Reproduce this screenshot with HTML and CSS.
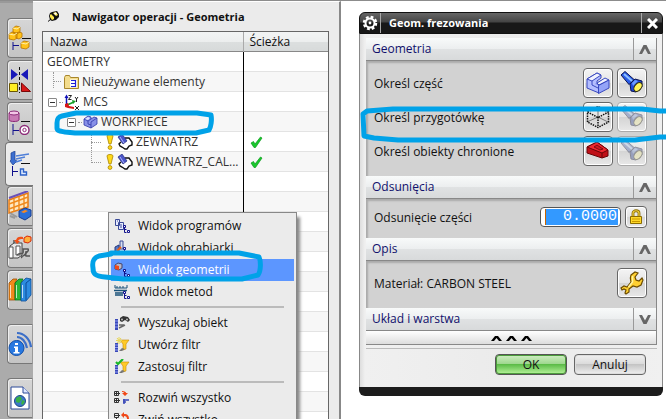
FILE: index.html
```html
<!DOCTYPE html>
<html lang="pl">
<head>
    <meta charset="UTF-8">
    <meta name="viewport" content="width=device-width, initial-scale=1.0">
    <title>Nawigator operacji - Geometria</title>
    <link rel="stylesheet" href="styles.css">
</head>
<body>
    <!-- Shared icons -->
    <svg class="defs" width="0" height="0">
        <symbol id="flashlight" viewBox="0 0 24 24">
            <path d="M1 4l4-3.500 9 8-5 5z" fill="#2a5ce8" stroke="#0a1450"/>
            <path d="M4 3l8 7" stroke="#8fc0ff" stroke-width="2"/>
            <path d="M10 13l5-5 7 2v6l-6 5-5-1z" fill="#2148d8" stroke="#0a1450"/>
            <path d="M12 12l3-3 3 1-5 5z" fill="#6c9cff"/>
            <ellipse cx="18" cy="16" rx="3.300" ry="5" transform="rotate(40 18 16)" fill="#fff45a" stroke="#33300a"/>
        </symbol>
        <symbol id="chevron-up" viewBox="0 0 12 9">
            <path d="M0 9L4.500 0h3L12 9H9L6 3.500 3 9z"/>
        </symbol>
        <symbol id="tool" viewBox="0 0 16 16">
            <path d="M4 4l5 1 5 2 1 4-3 1-3 3-4-2-3-2 1-3z" fill="#fff"/>
            <path d="M8 4h4l3 4v3l-3 1-2 3H8l-3-2-2-1-1-2 2-2" fill="none" stroke="#111" stroke-width="1.400"/>
            <path d="M1 3l4-3 5 7-4 3z" fill="#4a55c8" stroke="#20287c" stroke-width=".7"/>
            <path d="M3 3l4 6" stroke="#a9b2ff"/>
        </symbol>
        <symbol id="warn" viewBox="0 0 8 16">
            <path d="M1 2c0-2 6-2 6 0L5 10H3z" fill="#ffd91a" stroke="#a98500" stroke-width=".8"/>
            <circle cx="4" cy="13.500" r="1.900" fill="#ffd91a" stroke="#a98500" stroke-width=".8"/>
        </symbol>
        <symbol id="check" viewBox="0 0 13 12">
            <path d="M1 7l2.500-1.500L5 8l5.500-7L12 2 5.500 11.500H4z" fill="#18c82c" stroke="#0b9a1c" stroke-width=".7"/>
        </symbol>
        <symbol id="branch" viewBox="0 0 16 16">
            <path d="M10.500 9v5.500h2M10.500 11.500h2" fill="none" stroke="#10108c"/>
            <path d="M9.500 7.500h2v2h-2zM13.500 12.500h2v2h-2z" fill="#fff" stroke="#10108c"/>
        </symbol>
        <symbol id="funnel" viewBox="0 0 16 16">
            <path d="M6 3h9l-3 4v5l-3 1V7z" fill="#ffca28" stroke="#c88a00" stroke-width=".6"/>
            <path d="M1 6h3v9H1z" fill="#3948b8"/>
            <path d="M1 8h3M1 10.500h3M1 13h3" stroke="#aab4ff" stroke-width=".8"/>
            <path d="M5 14l3-3 3 1-3 2z" fill="#777"/>
        </symbol>
    </svg>

    <div class="app">
        <!-- Resource bar -->
        <nav class="resource-bar">
            <button class="tab" aria-label="Złożenie">
                <svg width="24" height="26" viewBox="0 0 24 26">
                    <g fill="#ffc21a" stroke="#b87300" stroke-width=".8">
                        <path d="M5 3l3-2 4 1v5l-3 2-4-1zM1 9l3-2 5 1v5l-3 2-5-1zM8 8l3-1 3 1v4l-3 2-3-1z"/>
                        <path d="M13 18l3-2 5 1v5l-3 2-5-1z"/>
                    </g>
                    <path d="M5 3l4 1 3-2M1 9l5 1 3-2M13 18l5 1 3-2" fill="none" stroke="#fff0a8"/>
                    <path d="M5 17v8M5 20.500h6" stroke="#10108c" fill="none"/>
                    <path d="M14 13.500h9" stroke="#111"/>
                </svg>
            </button>
            <button class="tab" aria-label="Więzy">
                <svg width="24" height="26" viewBox="0 0 24 26">
                    <path d="M3 2l7 5.500L3 13zM20 2l-7 5.500L20 13z" fill="#1818b8"/>
                    <path d="M11.500 0v26" stroke="#111" stroke-dasharray="3 2"/>
                    <path d="M1.500 16.500h8v8h-8z" fill="#ffee22" stroke="#6b5600"/>
                    <path d="M13.500 16v8.500h9z" fill="#d81818" stroke="#7a0808"/>
                </svg>
            </button>
            <button class="tab" aria-label="Części">
                <svg width="24" height="26" viewBox="0 0 24 26">
                    <path d="M1 4v7c1 2 9 2 10 0V4z" fill="#c87ab4" stroke="#8c2a78"/>
                    <ellipse cx="6" cy="4" rx="5" ry="2" fill="#f3c6e6" stroke="#8c2a78"/>
                    <path d="M5 15v11M5 21.500h6" stroke="#10108c"/>
                    <path d="M13 12.500h9" stroke="#111"/>
                    <circle cx="16.500" cy="21" r="4.500" fill="#fff" stroke="#8c2a78" stroke-width="1.400"/>
                    <circle cx="16.500" cy="21" r="1.700" fill="none" stroke="#8c2a78"/>
                </svg>
            </button>
            <button class="tab active" aria-label="Nawigator operacji">
                <svg width="24" height="26" viewBox="0 0 24 26">
                    <path d="M3 2l4-2v9l2 1-4 4-3-4 1-1z" fill="#3c6fd0" stroke="#1c3f90" stroke-width=".7"/>
                    <path d="M8 5l13-2M8 8l9-2M8 11l6-2" stroke="#4f7fd8" stroke-width="1.500"/>
                    <path d="M4.500 15v10M5 20.500h5" stroke="#10108c"/>
                    <path d="M13 12.500h9" stroke="#111"/>
                    <path d="M12.500 18h3v3h3v3h-6z" fill="#dfeaff" stroke="#2c62c8" stroke-width="1.400"/>
                </svg>
            </button>
            <button class="tab" aria-label="Szablony">
                <svg width="24" height="30" viewBox="0 0 24 30">
                    <path d="M1 9L20 2v14L1 22z" fill="#ffe8c0" stroke="#e87a10" stroke-width="1.500"/>
                    <path d="M1 13l19-7M1 18l19-7M6 8v13M11 6v13M16 4v13" stroke="#f08a1c" stroke-width="1.400"/>
                    <path d="M1 7L20 0" stroke="#6a50b8" stroke-width="2"/>
                    <path d="M11 20l6-3 6 2v6l-6 4-6-3z" fill="#2c6fd8" stroke="#1a3f90"/>
                    <path d="M13 21l4-2 3 1-4 2z" fill="#ff8a1c"/>
                    <path d="M2 22l7 4M2 25l5 2" stroke="#999" stroke-width="2"/>
                </svg>
            </button>
            <button class="tab" aria-label="Maszyna">
                <svg width="24" height="26" viewBox="0 0 24 26">
                    <path d="M2 11l4-3h8v12l-4 3H2z" fill="#e8e8e8" stroke="#444"/>
                    <path d="M1 12h4v11H1zM8 11h4v9H8z" fill="#fff" stroke="#555"/>
                    <path d="M6 8V5M9 20c4-4 7 2 6-6h5c2 3-4 3-2 7h4M14 23c-2-3 5-1 4-7" fill="none" stroke="#555" stroke-width="1.500"/>
                    <path d="M16 3l3-2 4 1v4l-3 2-4-1z" fill="#ffb03c" stroke="#d82808"/>
                    <path d="M15 2c-4-1-6 0-7 3H6l3 4 3-3h-2c1-2 3-2 5-2z" fill="#f05018"/>
                </svg>
            </button>
            <button class="tab" aria-label="Biblioteka">
                <svg width="24" height="26" viewBox="0 0 24 26">
                    <path d="M1 6l4-4h4L7 6v17H1z" fill="#f08a1c" stroke="#9c4c00" stroke-width=".8"/>
                    <path d="M7 6l4-4h4l-2 4v17H7z" fill="#28b838" stroke="#0a6c18" stroke-width=".8"/>
                    <path d="M13 6l5-5 5 1v16l-5 6h-5z" fill="#2c8be0" stroke="#0c4c98" stroke-width=".8"/>
                    <path d="M2.500 8v13M8.500 8v13M14.500 8v13" stroke="#fff" stroke-opacity=".7"/>
                    <path d="M18 6v17M18 6l5-4" stroke="#0c4c98" fill="none"/>
                </svg>
            </button>
            <button class="tab spaced" aria-label="Informacje">
                <svg width="24" height="26" viewBox="0 0 24 26">
                    <path d="M9 2c7 0 13 6 14 14M9 6c5 0 9 5 10 11M9 10c3 0 5 3 6 6" fill="none" stroke="#3c6fc8" stroke-width="2.200"/>
                    <circle cx="8.500" cy="17" r="7.500" fill="#2878e0" stroke="#1450a8"/>
                    <path d="M7 12h3v2H7zM6 15.500h4V21h1.500v1.500H5.500V21H7v-4H6z" fill="#fff"/>
                </svg>
            </button>
            <button class="tab spaced" aria-label="Przeglądarka">
                <svg width="20" height="24" viewBox="0 0 20 24">
                    <path d="M1 1h12l6 6v16H1z" fill="#fff" stroke="#2c4a98"/>
                    <path d="M13 1v6h6" fill="#dfe8ff" stroke="#2c4a98"/>
                    <circle cx="10" cy="15" r="5.500" fill="#3c78c8" stroke="#1c4888"/>
                    <path d="M6 12l4-2 2 3-3 4-3-1zM12 14l3 1-2 4-2-1z" fill="#38b048"/>
                </svg>
            </button>
        </nav>

        <!-- Operation navigator -->
        <section class="navigator">
            <header class="navigator-title">
                <svg width="11" height="11" viewBox="0 0 11 11">
                    <path d="M0 10.500L3 8" stroke="#111"/>
                    <path d="M2 2l2-1 5-1 2 3v3L8 9l-4 1-2-1-1-4z" fill="#111"/>
                    <path d="M2 4l1-1 3 3v2l-2 1-2-3zM5 2l3-1 2 3-2 1z" fill="#ffe94a"/>
                    <path d="M6 2l2-.5 1 1.500-2 1z" fill="#fff"/>
                </svg>
                <h1>Nawigator operacji - Geometria</h1>
            </header>
            <div class="tree">
                <table>
                    <thead>
                        <tr><th>Nazwa</th><th class="path">Ścieżka</th></tr>
                    </thead>
                    <tbody>
                        <tr>
                            <td><div class="node root">GEOMETRY</div></td><td class="path"></td>
                        </tr>
                        <tr>
                            <td>
                                <div class="node level-1">
                                    <i class="twig"></i>
                                    <svg width="15" height="14" viewBox="0 0 15 14">
                                        <path d="M.5 2.500l1-2h4l1 2h8v11H.5z" fill="#f3dc8c" stroke="#a8862c"/>
                                        <path d="M6 4.500h7v8H6z" fill="#fff"/>
                                        <path d="M7 5.500h5M7 8.500h5M7 11.500h5M11.500 5v7" stroke="#2020d8" stroke-width="1.200"/>
                                    </svg>
                                    Nieużywane elementy
                                </div>
                            </td>
                            <td class="path"></td>
                        </tr>
                        <tr>
                            <td>
                                <div class="node level-1 expanded">
                                    <i class="toggle"></i>
                                    <svg width="16" height="17" viewBox="0 0 16 17">
                                        <path d="M2.500 12V3" stroke="#1010b8" stroke-width="1.500"/>
                                        <path d="M.5 4l2-3.500 2 3.500z" fill="#1010b8"/>
                                        <path d="M3 11l7-3" stroke="#18a028" stroke-width="1.500"/>
                                        <path d="M8 6l4 1-3 3z" fill="#18a028"/>
                                        <path d="M1 10l3-1 1 3 5 1v2l-6-1-3-1z" fill="#d81818"/>
                                        <path d="M4.500 1.500h3l-3 4h3M11 3l1.500 2L14 3m-1.500 2v3M11 12l4 4m0-4l-4 4" fill="none" stroke="#222"/>
                                    </svg>
                                    MCS
                                </div>
                            </td>
                            <td class="path"></td>
                        </tr>
                        <tr>
                            <td>
                                <div class="node level-2 expanded">
                                    <i class="toggle"></i>
                                    <svg width="15" height="14" viewBox="0 0 15 14">
                                        <path d="M1 4l4-3 3 1v2l3-2 3 1v6l-6 4-7-3z" fill="#8890e8" stroke="#3038a8" stroke-width=".8"/>
                                        <path d="M1 4l4 2 3-2M5 6v3l3 1V7l6-4M8 10v3" fill="none" stroke="#3038a8" stroke-width=".8"/>
                                        <path d="M2 4l3-2 2 1-2 2zM9 5l3-2" fill="#dfe3ff"/>
                                    </svg>
                                    WORKPIECE
                                    <svg class="marker marker-node" width="160" height="28" viewBox="0 0 160 28">
                                        <path d="M22 4L8 7C4 8 3 10 3 14v5c0 3 3 3 8 4l10 1h121l13-3c2-3 3-10 2-15l-14-2z"/>
                                    </svg>
                                </div>
                            </td>
                            <td class="path"></td>
                        </tr>
                        <tr>
                            <td>
                                <div class="node level-3">
                                    <i class="twig"></i>
                                    <svg width="8" height="16"><use href="#warn"/></svg>
                                    <svg width="16" height="16"><use href="#tool"/></svg>
                                    ZEWNATRZ
                                </div>
                            </td>
                            <td class="path"><svg width="13" height="12"><use href="#check"/></svg></td>
                        </tr>
                        <tr>
                            <td>
                                <div class="node level-3">
                                    <i class="twig"></i>
                                    <svg width="8" height="16"><use href="#warn"/></svg>
                                    <svg width="16" height="16"><use href="#tool"/></svg>
                                    WEWNATRZ_CAL...
                                </div>
                            </td>
                            <td class="path"><svg width="13" height="12"><use href="#check"/></svg></td>
                        </tr>
                    </tbody>
                </table>

                <!-- Context menu -->
                <div class="menu" role="menu">
                    <button class="menu-item" role="menuitem">
                        <svg width="16" height="16" viewBox="0 0 16 16">
                            <path d="M1.500 1.500h4v6h-4zM4.500 4.500h5v7h-5z" fill="#e8ecff" stroke="#3a4a98"/>
                            <path d="M6 7h2M6 9h2M3 3h1" stroke="#3a4a98"/><use href="#branch"/>
                        </svg>
                        Widok programów
                    </button>
                    <button class="menu-item" role="menuitem">
                        <svg width="16" height="16" viewBox="0 0 16 16">
                            <path d="M6 1h3v8H6z" fill="#d8e0f0" stroke="#3a4a98"/>
                            <path d="M1 7l4-2v6l-4 2z" fill="#5878c8" stroke="#24387c"/>
                            <path d="M3 11l4-4" stroke="#e86018" stroke-width="2"/><use href="#branch"/>
                        </svg>
                        Widok obrabiarki
                    </button>
                    <button class="menu-item selected" role="menuitem">
                        <svg width="16" height="16" viewBox="0 0 16 16">
                            <path d="M1 3l3-2 4 1v4L5 8 1 7z" fill="#b8b8c8" stroke="#44446c"/>
                            <path d="M1 3l4 1v4L1 7z" fill="#f04818"/><use href="#branch"/>
                        </svg>
                        Widok geometrii
                        <svg class="marker marker-menu" width="174" height="36" viewBox="0 0 174 36">
                            <path d="M22 6l-12 2C4 10 3 14 4 20c0 6 2 8 12 9l18 2h119l16-4c3-4 3-14 1-18L150 5H22z"/>
                        </svg>
                    </button>
                    <button class="menu-item" role="menuitem">
                        <svg width="16" height="16" viewBox="0 0 16 16">
                            <path d="M1 1v3h12V1M3 2v2M6 2v2M9 2v2" fill="none" stroke="#185078"/>
                            <path d="M0 6.500h13M1 9h8M1 11h8" stroke="#185078" stroke-width="1.400"/><use href="#branch"/>
                        </svg>
                        Widok metod
                    </button>
                    <hr>
                    <button class="menu-item" role="menuitem">
                        <svg width="16" height="16" viewBox="0 0 16 16">
                            <path d="M1 4h3v11H1z" fill="#3948b8"/>
                            <path d="M1 6h3M1 9h3M1 12h3" stroke="#aab4ff" stroke-width=".8"/>
                            <path d="M6 3l3-2 5 1 2 3-2 2-3-2-3 2-2-1z" fill="#333"/>
                            <circle cx="8" cy="4.500" r="1" fill="#bbb"/><circle cx="13" cy="4.500" r="1" fill="#bbb"/>
                            <path d="M5 13l6-3M5 10h5" stroke="#666" stroke-width="1.500"/>
                        </svg>
                        Wyszukaj obiekt
                    </button>
                    <button class="menu-item" role="menuitem">
                        <svg width="16" height="16" viewBox="0 0 16 16">
                            <use href="#funnel"/>
                            <path d="M5 0v7M2 3.500h6M3 1l4 5M7 1L3 6" stroke="#e8d858"/>
                        </svg>
                        Utwórz filtr
                    </button>
                    <button class="menu-item" role="menuitem">
                        <svg width="16" height="16" viewBox="0 0 16 16">
                            <use href="#funnel"/>
                            <path d="M2 3l2 2 5-5" fill="none" stroke="#18b828" stroke-width="2.200"/>
                        </svg>
                        Zastosuj filtr
                    </button>
                    <hr>
                    <button class="menu-item" role="menuitem">
                        <svg width="16" height="16" viewBox="0 0 16 16">
                            <path d="M.5 1.500h4v4h-4zM.5 8.500h4v4h-4zM2.500 2v3M1 3.500h5M2.500 9v3M1 10.500h5" fill="none" stroke="#333"/>
                            <path d="M8 1c3 0 4 1 4 2h2l-3 3-3-3h2c0-1-1-1-2-1z" fill="#f04818"/>
                            <path d="M9 10h6M9 12h3M10 9v5" stroke="#3948b8" stroke-width="1.500"/>
                        </svg>
                        Rozwiń wszystko
                    </button>
                    <button class="menu-item" role="menuitem">
                        <svg width="16" height="16" viewBox="0 0 16 16">
                            <path d="M.5 1.500h4v4h-4zM1 3.500h5M2.500 6v8h4" fill="none" stroke="#333"/>
                            <path d="M13 7c0-2-1-3-3-3v2L7 3l3-3v2c4 0 5 2 5 5z" fill="#f04818"/>
                        </svg>
                        Zwiń wszystko
                    </button>
                </div>
            </div>
        </section>

        <!-- Milling geometry dialog -->
        <main class="workspace">
            <form class="dialog">
                <header class="dialog-title">
                    <svg class="gear" width="20" height="20" viewBox="0 0 20 20">
                        <circle cx="10" cy="10" r="6" fill="none" stroke="#fff" stroke-width="2.500" stroke-dasharray="2.700 2"/>
                        <circle cx="10" cy="10" r="4.500" fill="none" stroke="#fff" stroke-width="2"/>
                        <circle cx="10" cy="10" r="1.400" fill="#fff"/>
                    </svg>
                    <h2>Geom. frezowania</h2>
                    <button type="button" class="close" aria-label="Zamknij">
                        <svg width="11" height="11" viewBox="0 0 11 11">
                            <path d="M1 1l9 9M10 1l-9 9" stroke="#fff" stroke-width="3"/>
                        </svg>
                    </button>
                </header>

                <div class="dialog-body">
                    <div class="sections">
                        <h3>Geometria <button type="button" class="fold" aria-label="Zwiń"><svg width="12" height="9"><use href="#chevron-up"/></svg></button></h3>
                        <div class="section-body">
                            <div class="row">
                                <span class="label">Określ część</span>
                                <button type="button" class="tool-button" aria-label="Część">
                                    <svg width="24" height="24" viewBox="0 0 24 24">
                                        <path d="M1 8l10-6 4 2v3l-4 3v3l2 1v8L1 17z" fill="#b4beff" stroke="#3848c0"/>
                                        <path d="M1 8l10-6 4 2-9 6z" fill="#f0f2ff" stroke="#3848c0"/>
                                        <path d="M6 10v4l6 3" fill="none" stroke="#3848c0"/>
                                        <path d="M9 13l6-4 3 1-5 4z" fill="#7480e0"/>
                                        <path d="M11 12l8-5 4 2-10 5z" fill="#f0f2ff" stroke="#3848c0"/>
                                        <path d="M12.500 14.500L23 9v8l-10.500 5.500z" fill="#94a4f8" stroke="#3848c0"/>
                                    </svg>
                                </button>
                                <button type="button" class="tool-button" aria-label="Wyświetl część"><svg width="24" height="24"><use href="#flashlight"/></svg></button>
                            </div>
                            <div class="row">
                                <span class="label">Określ przygotówkę</span>
                                <button type="button" class="tool-button" aria-label="Przygotówka">
                                    <svg width="24" height="24" viewBox="0 0 24 24">
                                        <path d="M12 1v11L1 17M12 12l10 5" fill="none" stroke="#777"/>
                                        <path d="M1.500 7L12 1.500 22.500 7v10L12 22.500 1.500 17zM1.500 7L12 12.500 22.500 7M12 12v10" fill="none" stroke="#111" stroke-width="1.500" stroke-dasharray="1.500 1"/>
                                    </svg>
                                </button>
                                <button type="button" class="tool-button" disabled aria-label="Wyświetl przygotówkę"><svg width="24" height="24"><use href="#flashlight"/></svg></button>
                                <svg class="marker marker-row" width="308" height="38" viewBox="0 0 308 38">
                                    <path d="M308 6h-8l-18-2H33L7 6 3 9 4 31l10 2 24 2h237l25-3h8"/>
                                </svg>
                            </div>
                            <div class="row">
                                <span class="label">Określ obiekty chronione</span>
                                <button type="button" class="tool-button" aria-label="Obiekty chronione">
                                    <svg width="24" height="24" viewBox="0 0 24 24">
                                        <path d="M1 8l10-5 11 8v6l-6 2L1 14z" fill="#c01018" stroke="#680408"/>
                                        <path d="M1 8l10-5 11 8-6 3z" fill="#f02830" stroke="#680408"/>
                                        <path d="M8 8l3-2 6 4-3 1z" fill="#d01820" stroke="#680408" stroke-width=".8"/>
                                        <path d="M16 14v5" stroke="#680408"/>
                                    </svg>
                                </button>
                                <button type="button" class="tool-button" disabled aria-label="Wyświetl obiekty"><svg width="24" height="24"><use href="#flashlight"/></svg></button>
                            </div>
                        </div>

                        <h3>Odsunięcia <button type="button" class="fold" aria-label="Zwiń"><svg width="12" height="9"><use href="#chevron-up"/></svg></button></h3>
                        <div class="section-body">
                            <div class="row">
                                <label class="label" for="offset">Odsunięcie części</label>
                                <span class="field"><input id="offset" type="text" value="0.0000"></span>
                                <button type="button" class="tool-button small" aria-label="Zablokuj">
                                    <svg width="14" height="16" viewBox="0 0 14 16">
                                        <path d="M4 8V4c0-3 6-3 6 0v4" fill="none" stroke="#8a6c00" stroke-width="2.800"/>
                                        <path d="M4 8V4c0-3 6-3 6 0v4" fill="none" stroke="#f0d040" stroke-width="1.200"/>
                                        <path d="M1.500 7.500h11v7h-11z" fill="#ffd828" stroke="#8a6c00"/>
                                        <path d="M3 10h8M3 12.500h8" stroke="#c89800"/>
                                    </svg>
                                </button>
                            </div>
                        </div>

                        <h3>Opis <button type="button" class="fold" aria-label="Zwiń"><svg width="12" height="9"><use href="#chevron-up"/></svg></button></h3>
                        <div class="section-body">
                            <div class="row">
                                <span class="label">Materiał: CARBON STEEL</span>
                                <button type="button" class="tool-button" aria-label="Edytuj materiał">
                                    <svg width="24" height="24" viewBox="0 0 24 24">
                                        <path d="M11 4l4-3 3 1-3 4 1 3 3 1 3-3 1 2-2 5-4 2-4-1-4 3v3l-3 2-1-1 1-3-2-1-2 1-1-2 3-2 3 1 4-5c-1-3-1-5 0-7z" fill="#ffd030" stroke="#6c4c00" stroke-width="1.200"/>
                                        <path d="M12.500 5v6l-4 5" fill="none" stroke="#fff4a0" stroke-width="1.500"/>
                                    </svg>
                                </button>
                            </div>
                        </div>

                        <h3>Układ i warstwa <button type="button" class="fold down" aria-label="Rozwiń"><svg width="12" height="9"><use href="#chevron-up"/></svg></button></h3>
                        <button type="button" class="collapse" aria-label="Mniej">
                            <svg width="11" height="6" viewBox="0 0 11 6"><path d="M0 6l4-5h3l4 5H8L5.500 3 3 6z"/></svg>
                            <svg width="11" height="6" viewBox="0 0 11 6"><path d="M0 6l4-5h3l4 5H8L5.500 3 3 6z"/></svg>
                            <svg width="11" height="6" viewBox="0 0 11 6"><path d="M0 6l4-5h3l4 5H8L5.500 3 3 6z"/></svg>
                        </button>
                    </div>
                    <div class="actions">
                        <button type="submit" class="push ok">OK</button>
                        <button type="button" class="push">Anuluj</button>
                    </div>
                </div>
            </form>
        </main>
    </div>
</body>
</html>
```
FILE: styles.css
```css
* {
    box-sizing: border-box;
}

body {
    margin: 0;
    height: 100vh;
    overflow: hidden;
    background: #fff;
    color: #111;
    font: 12px/20px "Open Sans", "Noto Sans", sans-serif;
}

button {
    font: inherit;
    color: inherit;
    padding: 0;
}

h1, h2, h3 {
    margin: 0;
    font-size: 12px;
}

h1, h2 {
    font-size: 11px;
    white-space: nowrap;
}

svg {
    flex: none;
    display: block;
}

.defs {
    position: absolute;
}

.app {
    display: grid;
    grid-template-columns: 33px 308fr 325fr;
    height: 100vh;
    border-top: 1px solid #8c8c8c;
}

/* Resource bar */
.resource-bar {
    display: flex;
    flex-direction: column;
    align-items: flex-end;
    gap: 2px;
    background: #ababab;
    border-top: 2px solid #999;
    padding-top: 15px;
}

.tab {
    flex: none;
    display: flex;
    align-items: center;
    justify-content: center;
    width: 26px;
    height: 40px;
    border: 1px solid #777;
    border-right-color: #999;
    border-radius: 4px 0 0 4px;
    background: linear-gradient(#d6d6d6, #c4c4c4);
    box-shadow: inset 1px 1px #eee;
    overflow: hidden;
}

.tab.active {
    width: 28px;
    height: 44px;
    margin: -2px 0;
    background: #ebebeb;
    border-right: none;
}

.tab.spaced {
    margin-top: 12px;
}

/* Navigator */
.navigator {
    display: flex;
    flex-direction: column;
    padding: 0 10px 0 9px;
    background: #ebebeb;
    border-top: 1px solid #fff;
    border-right: 2px solid #888;
    min-width: 0;
}

.navigator-title {
    display: flex;
    align-items: center;
    gap: 13px;
    height: 29px;
    padding-left: 6px;
}

.tree {
    position: relative;
    flex: 1;
    border: 1px solid #666;
    border-bottom: none;
    background:
        linear-gradient(#000, #000) right 84px top 20px / 1px 100% no-repeat,
        repeating-linear-gradient(#fff 0 19px, #e3e3e3 19px 20px, #f7f7f7 20px 39px, #e3e3e3 39px 40px) 0 20px;
}

.tree table {
    width: 100%;
    border-collapse: collapse;
    table-layout: fixed;
}

.tree th {
    height: 20px;
    padding: 0 0 0 7px;
    font-weight: normal;
    text-align: left;
    line-height: 18px;
    background: linear-gradient(#f2f4f4, #eceeee 50%, #dcdfdf 50%, #d6d9d9);
    box-shadow: inset 0 -1px #888;
}

.tree th.path {
    border-left: 1px solid #aaa;
    padding-left: 6px;
}

.tree td {
    height: 20px;
    padding: 0;
    color: #333;
}

.tree .path {
    width: 85px;
}

.tree td.path {
    padding-left: 7px;
}

.node {
    position: relative;
    display: flex;
    align-items: center;
    gap: 3px;
    height: 20px;
    white-space: nowrap;
}

.root {
    padding-left: 4px;
}

.level-1 {
    padding-left: 10px;
}

.level-3 {
    padding-left: 48px;
}

.twig {
    position: relative;
    align-self: flex-start;
    width: 8px;
    height: 10px;
    border-bottom: 1px dotted #999;
}

.twig::before {
    content: "";
    position: absolute;
    left: 0;
    top: 0;
    height: 16px;
    border-left: 1px dotted #999;
}

.level-3 .twig {
    width: 10px;
    height: 11px;
    margin-right: 2px;
}

tr:last-child .twig::before {
    top: -5px;
}

.expanded.level-1 {
    padding-left: 5px;
}

.expanded.level-2 {
    padding-left: 24px;
}

.toggle {
    position: relative;
    width: 9px;
    height: 9px;
    border: 1px solid #888;
    border-radius: 1px;
    background: linear-gradient(#333, #333) center / 5px 1px no-repeat #fff;
    margin-right: 4px;
}

.toggle::after {
    content: "";
    position: absolute;
    left: 10px;
    top: 3px;
    width: 4px;
    border-top: 1px dotted #999;
}

/* Hand-drawn highlights */
.marker {
    position: absolute;
    z-index: 3;
    fill: none;
    stroke: #00a2e8;
    stroke-width: 5px;
    stroke-linejoin: round;
    pointer-events: none;
}

.marker-node {
    left: 11px;
    top: -3px;
}

.marker-menu {
    left: -22px;
    top: -11px;
}

.marker-row {
    left: -14px;
    top: 3px;
}

/* Context menu */
.menu {
    position: absolute;
    left: 65px;
    top: 180px;
    width: 189px;
    padding: 2px;
    border: 1px solid #888;
    background: #ebebeb;
    box-shadow: 3px 5px 3px #888;
}

.menu-item {
    position: relative;
    display: flex;
    align-items: center;
    gap: 8px;
    width: 100%;
    height: 22px;
    padding-left: 3px;
    border: none;
    background: none;
    white-space: nowrap;
}

.menu-item.selected {
    z-index: 1;
    background: #5c96ff;
    color: #fff;
}

.menu hr {
    height: 2px;
    margin: 3px 10px 4px;
    border: none;
    background: #bbb;
}

/* Dialog */
.workspace {
    padding: 11px 3px 0 18px;
    min-width: 0;
}

.dialog {
    background: #ebebeb;
    border-radius: 6px;
    border-bottom: 9px solid #1c1c1c;
}

.dialog-title {
    display: flex;
    align-items: center;
    height: 22px;
    border: 1px solid #111;
    border-radius: 6px 6px 0 0;
    background: linear-gradient(#666, #444 45%, #181818 50%);
    color: #fff;
}

.dialog-title h2 {
    flex: 1;
    padding-left: 8px;
    border-left: 1px solid #aaa;
}

.close {
    display: flex;
    align-items: center;
    justify-content: center;
    width: 21px;
    height: 20px;
    border: solid #aaa;
    border-width: 0 0 0 1px;
    background: none;
}

.dialog-body {
    padding: 4px 5px 12px 6px;
    border: 1px solid #888;
    border-width: 0 1px;
    background: linear-gradient(90deg, #ddd, #f0f0f0 5px, #ebebeb 50%, #f0f0f0);
}

.sections {
    border-right: 1px solid #888;
}

.sections h3 {
    display: flex;
    align-items: center;
    justify-content: space-between;
    height: 23px;
    padding-left: 6px;
    border-bottom: 1px solid #888;
    background: linear-gradient(#f8fafa, #eceeef 50%, #e0e2e3 50%, #d8dadb);
    color: #10106c;
    font-weight: normal;
}

.fold {
    display: flex;
    align-items: center;
    justify-content: center;
    width: 23px;
    height: 22px;
    border: none;
    border-left: 1px solid #999;
    background: none;
    fill: #666;
}

.fold.down svg {
    transform: rotate(180deg);
}

.section-body {
    display: flex;
    flex-direction: column;
    gap: 4px;
    padding: 7px 9px 10px 8px;
    background: #d2d2d2;
    box-shadow: inset 2px 2px 2px #aaa;
}

.row {
    position: relative;
    display: flex;
    align-items: center;
    gap: 4px;
}

.label {
    flex: 1;
    padding-top: 2px;
    white-space: nowrap;
}

.tool-button {
    display: flex;
    align-items: center;
    justify-content: center;
    width: 30px;
    height: 30px;
    border: 1px solid #666;
    border-radius: 4px;
    background: linear-gradient(#f4f4f4, #e4e4e4 50%, #d4d4d4 50%, #e8e8e8);
    box-shadow: inset 0 0 0 1px #fff;
}

.tool-button.small {
    width: 22px;
    height: 22px;
}

.tool-button:disabled {
    border-color: #aaa;
}

.tool-button:disabled svg {
    opacity: 0.4;
    filter: saturate(0.5);
}

.field {
    width: 81px;
    height: 20px;
    padding: 1px 2px 1px 4px;
    border: 1px solid #555;
    border-radius: 4px;
    background: #fff;
}

.field input {
    display: block;
    width: 100%;
    height: 16px;
    padding: 0 1px;
    border: none;
    border-left: 1px solid #c86400;
    background: #3399ff;
    color: #fff;
    font: 15px/16px "Liberation Mono", monospace;
    text-align: right;
}

.collapse {
    display: flex;
    align-items: center;
    justify-content: center;
    gap: 4px;
    width: 100%;
    height: 14px;
    border: none;
    border-bottom: 1px solid #888;
    background: linear-gradient(#fff, #ddd);
}

.actions {
    display: flex;
    justify-content: flex-end;
    gap: 7px;
    margin-top: 3px;
    padding: 5px 11px 0 0;
    border-top: 1px solid #bbb;
}

.push {
    width: 72px;
    height: 21px;
    border: 1px solid #666;
    border-radius: 4px;
    background: linear-gradient(#f0f0f0, #dcdcdc 45%, #c4c4c4 50%, #f0f0f0);
    box-shadow: inset 0 0 0 1px #ddd;
    line-height: 18px;
}

.push.ok {
    border-color: #555;
    background: linear-gradient(#d0efc4, #a0d890 45%, #5cbc48 50%, #b8f49c);
    box-shadow: inset 0 0 0 1px #4c9c3c;
}
```
